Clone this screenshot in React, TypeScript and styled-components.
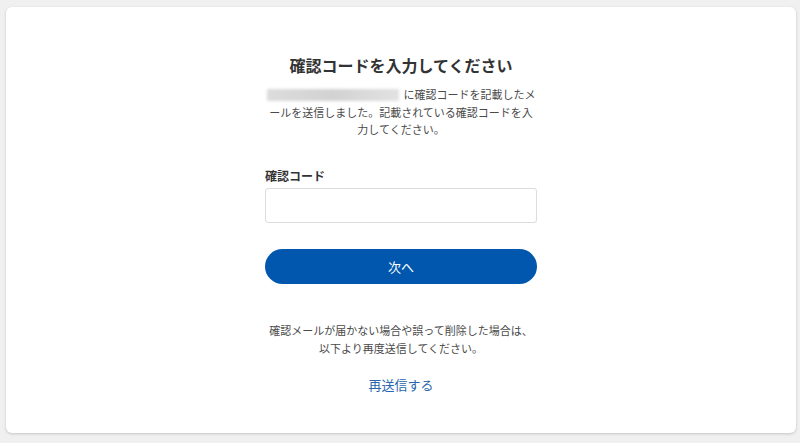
import React from 'react'
import styled, { createGlobalStyle } from 'styled-components'

const GlobalStyle = createGlobalStyle`
  html, body {
    margin: 0;
    padding: 0;
    background: #f0f0f0;
    font-family: "Noto Sans CJK JP", "Noto Sans", sans-serif;
  }
`

const Page = styled.div`
  padding: 7px 4px 10px 6px;
`

const Card = styled.div`
  background: #ffffff;
  border-radius: 6px;
  box-shadow: 0 1px 3px rgba(0, 0, 0, 0.18);
  height: 426px;
  box-sizing: border-box;
  padding-top: 46px;
  display: flex;
  justify-content: center;
`

const Column = styled.div`
  width: 272px;
  display: flex;
  flex-direction: column;
`

const Title = styled.h1`
  margin: 0;
  font-size: 16px;
  font-weight: 700;
  line-height: 24px;
  color: #333;
  text-align: center;
`

const Lead = styled.p`
  margin: 9px 0 0;
  font-size: 11px;
  line-height: 17.5px;
  color: #4a4a4a;
  text-align: center;
`

const Masked = styled.span`
  display: inline-block;
  width: 132px;
  height: 12px;
  margin-right: 5px;
  vertical-align: -2px;
  background: linear-gradient(90deg, #dcdcdc, #d2d2d2 50%, #e2e2e2);
  filter: blur(1.5px);
`

const Label = styled.label`
  margin-top: 28px;
  font-size: 12px;
  font-weight: 700;
  line-height: 18px;
  color: #333;
`

const Input = styled.input`
  margin-top: 3px;
  height: 35px;
  box-sizing: border-box;
  border: 1px solid #dcdcdc;
  border-radius: 3px;
  padding: 0 10px;
  font-size: 14px;
  outline: none;
`

const Button = styled.button`
  margin-top: 26px;
  height: 35px;
  border: none;
  border-radius: 18px;
  background: #0057ad;
  color: #ffffff;
  font-family: inherit;
  font-size: 13px;
  cursor: pointer;
`

const Note = styled.p`
  margin: 37px 0 0;
  font-size: 11px;
  line-height: 18px;
  color: #4a4a4a;
  text-align: center;
  white-space: nowrap;
`

const Resend = styled.a`
  margin-top: 18px;
  align-self: center;
  font-size: 13px;
  line-height: 20px;
  color: #2a66ad;
  text-decoration: none;
  cursor: pointer;
`

const App: React.FC = () => (
  <Page>
    <GlobalStyle />
    <Card>
      <Column>
        <Title>確認コードを入力してください</Title>
        <Lead>
          <Masked />
          に確認コードを記載したメールを送信しました。記載されている確認コードを入力してください。
        </Lead>
        <Label htmlFor="code">確認コード</Label>
        <Input id="code" type="text" />
        <Button type="button">次へ</Button>
        <Note>
          確認メールが届かない場合や誤って削除した場合は、
          <br />
          以下より再度送信してください。
        </Note>
        <Resend>再送信する</Resend>
      </Column>
    </Card>
  </Page>
)

export default App
